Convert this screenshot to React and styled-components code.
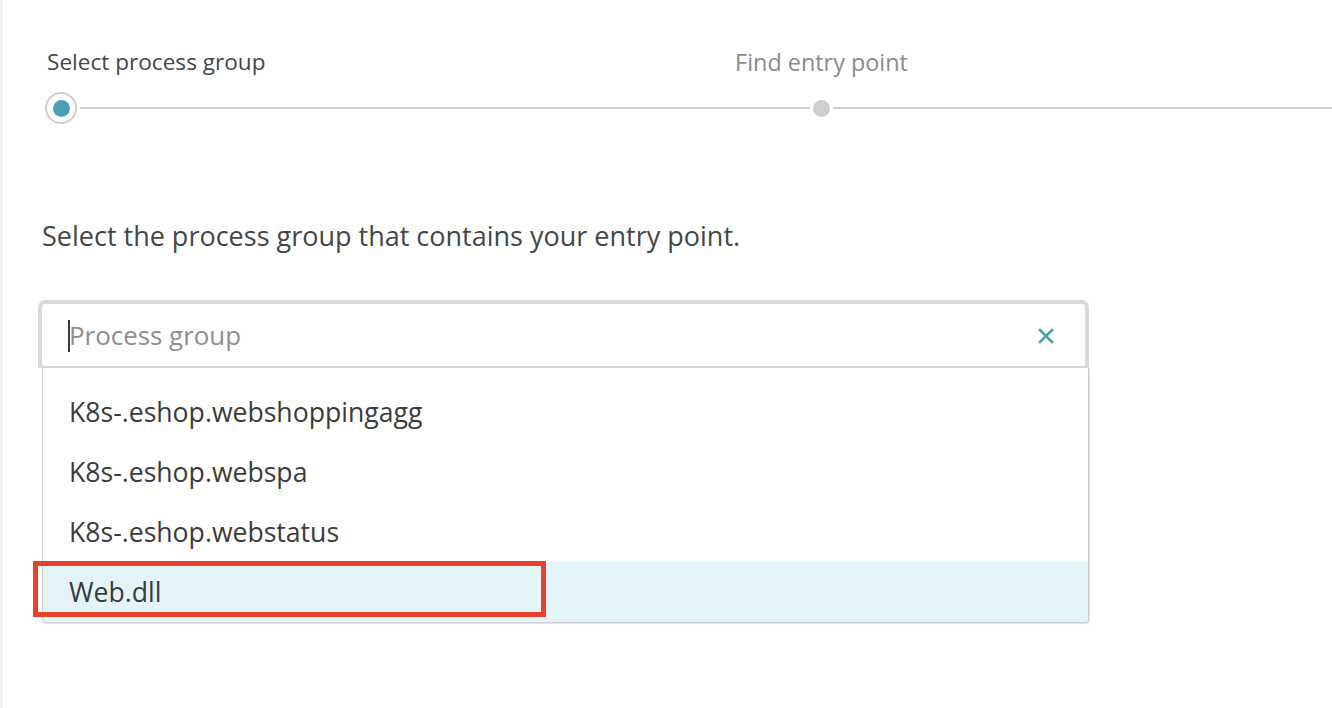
import React from 'react';
import styled, { createGlobalStyle } from 'styled-components';

const GlobalStyle = createGlobalStyle`
  html, body {
    margin: 0;
    padding: 0;
    background: #ffffff;
  }
  body {
    font-family: "Open Sans", "Liberation Sans", sans-serif;
    color: #454646;
    overflow: hidden;
  }
`;

const steps = ['Select process group', 'Find entry point'];
const options = [
  'K8s-.eshop.webshoppingagg',
  'K8s-.eshop.webspa',
  'K8s-.eshop.webstatus',
  'Web.dll',
];

function App() {
  return (
    <>
      <GlobalStyle />
      <Page>
        <Stepper>
          <FirstLabel>{steps[0]}</FirstLabel>
          <CenterLabel>
            <span>{steps[1]}</span>
          </CenterLabel>
          <ActiveMarker>
            <span />
          </ActiveMarker>
          <Line />
          <Dot />
          <Line />
        </Stepper>

        <Intro>Select the process group that contains your entry point.</Intro>

        <Combo>
          <InputBox>
            <Caret />
            <Placeholder>Process group</Placeholder>
            <ClearButton aria-label="clear">
              <svg width="16" height="16" viewBox="0 0 16 16">
                <path d="M2 2 L14 14 M14 2 L2 14" stroke="#4a9fb2" strokeWidth="2.6" strokeLinecap="square" />
              </svg>
            </ClearButton>
          </InputBox>
          <List>
            {options.map((o) => (
              <Option key={o} $active={o === 'Web.dll'}>
                {o}
                {o === 'Web.dll' && <Highlight />}
              </Option>
            ))}
          </List>
        </Combo>
      </Page>
    </>
  );
}

export default App;

const Page = styled.div`
  height: 708px;
  border-left: 3px solid #f1f1f1;
  padding: 0 0 0 35px;
  box-sizing: border-box;
`;

const Stepper = styled.div`
  display: grid;
  grid-template-columns: 32px 730px 17px 1fr;
  grid-template-rows: 46px 32px;
  column-gap: 3px;
  align-items: center;
  padding: 46px 0 0 7px;
`;

const FirstLabel = styled.div`
  grid-column: 1 / 3;
  grid-row: 1;
  align-self: start;
  font-size: 22.6px;
  line-height: 32px;
  color: #454646;
  margin-left: 2px;
  white-space: nowrap;
`;

const CenterLabel = styled.div`
  grid-column: 3;
  grid-row: 1;
  align-self: start;
  display: flex;
  justify-content: center;
  font-size: 23.4px;
  line-height: 32px;
  color: #8b8b8b;
  white-space: nowrap;
`;

const ActiveMarker = styled.div`
  grid-row: 2;
  width: 32px;
  height: 32px;
  box-sizing: border-box;
  border: 2px solid #cfcfcf;
  border-radius: 50%;
  display: flex;
  align-items: center;
  justify-content: center;

  span {
    width: 17px;
    height: 17px;
    border-radius: 50%;
    background: #4a9fb2;
  }
`;

const Line = styled.div`
  grid-row: 2;
  height: 2px;
  background: #cfcfcf;
`;

const Dot = styled.div`
  grid-row: 2;
  width: 17px;
  height: 17px;
  border-radius: 50%;
  background: #cfcfcf;
`;

const Intro = styled.p`
  margin: 95px 0 0 4px;
  font-size: 27px;
  line-height: 34px;
  color: #454646;
  white-space: nowrap;
`;

const Combo = styled.div`
  width: 1051px;
  margin-top: 47px;
`;

const InputBox = styled.div`
  height: 68px;
  box-sizing: border-box;
  display: flex;
  align-items: center;
  border: 4px solid #d9d9d9;
  border-bottom: 2px solid #d6d6d6;
  border-radius: 7px 7px 0 0;
  padding: 0 0 0 26px;
`;

const Caret = styled.span`
  width: 2px;
  height: 32px;
  background: #3a3a3a;
  margin-top: 2px;
`;

const Placeholder = styled.span`
  flex: 1;
  font-size: 25.9px;
  color: #8e8e8e;
  margin-left: -1px;
`;

const ClearButton = styled.button`
  border: none;
  background: none;
  padding: 0;
  margin: 2px 31px 0 0;
  width: 16px;
  height: 16px;
  display: flex;
`;

const List = styled.div`
  margin-left: 4px;
  padding-top: 14px;
  border: 1px solid #cccccc;
  border-top: none;
  border-radius: 0 0 4px 4px;
  box-shadow: 1px 1px 1px rgba(0, 0, 0, 0.12);
  display: flex;
  flex-direction: column;
`;

const Option = styled.div`
  position: relative;
  height: 60px;
  display: flex;
  align-items: center;
  padding-left: 26px;
  font-size: 26.6px;
  color: #3b3b3b;
  background: ${(p) => (p.$active ? '#e2f4f7' : 'transparent')};
  border-radius: ${(p) => (p.$active ? '0 0 4px 4px' : '0')};
`;

const Highlight = styled.span`
  position: absolute;
  left: -10px;
  top: -1px;
  width: 513px;
  height: 56px;
  box-sizing: border-box;
  border: 5px solid #e8412b;
`;
